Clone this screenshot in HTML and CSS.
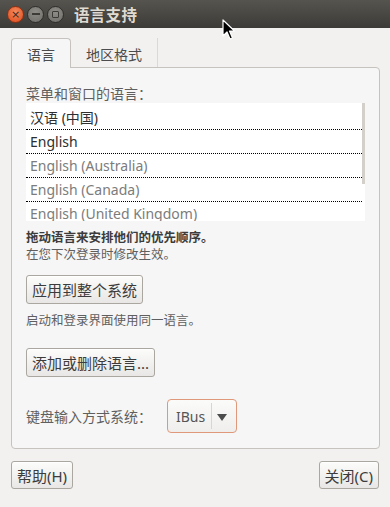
FILE: index.html
```html
<!DOCTYPE html>
<html lang="zh-CN">
<head>
    <meta charset="UTF-8">
    <meta name="viewport" content="width=device-width, initial-scale=1.0">
    <title>语言支持</title>
    <link rel="stylesheet" href="styles.css">
</head>
<body>
    <div class="window">
        <header class="titlebar">
            <div class="controls">
                <span class="ctl ctl-close">×</span>
                <span class="ctl ctl-min"><i class="min-bar"></i></span>
                <span class="ctl ctl-max"><i class="max-box"></i></span>
            </div>
            <div class="title">语言支持</div>
        </header>

        <main class="content">
            <div class="tabs">
                <div class="tab active">语言</div>
                <div class="tab">地区格式</div>
            </div>

            <section class="panel">
                <div class="label">菜单和窗口的语言：</div>
                <div class="lang-list">
                    <div class="row">汉语 (中国)</div>
                    <div class="row">English</div>
                    <div class="row dim">English (Australia)</div>
                    <div class="row dim">English (Canada)</div>
                    <div class="row dim">English (United Kingdom)</div>
                    <div class="scrollbar"></div>
                </div>

                <p class="hint"><b>拖动语言来安排他们的优先顺序。</b><br>在您下次登录时修改生效。</p>
                <button class="btn">应用到整个系统</button>
                <p class="hint">启动和登录界面使用同一语言。</p>
                <button class="btn btn-add">添加或删除语言...</button>

                <div class="kbd-row">
                    <span class="kbd-label">键盘输入方式系统：</span>
                    <div class="combo">
                        <span class="combo-text">IBus</span>
                        <span class="combo-sep"></span>
                        <span class="combo-arrow"></span>
                    </div>
                </div>
            </section>

            <div class="footer">
                <button class="btn">帮助(H)</button>
                <button class="btn">关闭(C)</button>
            </div>
        </main>

        <!-- mouse pointer on top of the window -->
        <svg class="pointer" width="14" height="22" viewBox="0 0 14 22">
            <path d="M1 1 L1 17 L5 13 L8 20 L10.5 19 L7.5 12 L12.5 12 Z" fill="#000" stroke="#fff" stroke-width="1.2" stroke-linejoin="round"/>
        </svg>
    </div>
</body>
</html>
```

FILE: styles.css
```css
body {
    margin: 0;
    padding: 0;
    background-color: #f2f1f0;
    font-family: "Noto Sans", "Noto Sans CJK SC", sans-serif;
    color: #3c3c3c;
}

.window {
    position: relative;
    width: 390px;
    height: 507px;
    overflow: hidden;
}

.titlebar {
    display: flex;
    align-items: center;
    height: 28px;
    background: linear-gradient(#55544f, #3c3b37);
}

.controls {
    display: flex;
    align-items: center;
    gap: 3px;
    padding-left: 7px;
    width: 67px;
}

.ctl {
    display: flex;
    align-items: center;
    justify-content: center;
    width: 15px;
    height: 15px;
    border-radius: 50%;
    border: 1px solid #2f2e2b;
    font-size: 12px;
    line-height: 1;
    color: #3a2a22;
}

.ctl-close {
    background: radial-gradient(circle at 50% 35%, #f58a5c, #dd4a1c);
    border-color: #8a3214;
    font-family: "DejaVu Sans", sans-serif;
    font-size: 11px;
}

.ctl-min,
.ctl-max {
    background: radial-gradient(circle at 50% 35%, #8e8d88, #6e6d68);
}

.min-bar {
    display: block;
    width: 8px;
    height: 2px;
    background-color: #3c3b37;
}

.max-box {
    display: block;
    width: 5px;
    height: 5px;
    border: 1.5px solid #3c3b37;
    border-radius: 1px;
}

.title {
    font-family: "Noto Sans CJK SC", sans-serif;
    font-weight: bold;
    font-size: 15.5px;
    color: #dfdbd2;
    letter-spacing: 0.3px;
}

.content {
    padding: 10px 10px 0 11px;
}

.tabs {
    display: flex;
    font-size: 14px;
    line-height: 18px;
}

.tab {
    padding: 8px 15px 3px;
    color: #4c4c4c;
    border-right: 1px solid #dcd9d4;
}

.tab.active {
    position: relative;
    z-index: 1;
    padding: 7px 15px 4px;
    margin-bottom: -1px;
    background-color: #f6f6f6;
    border: 1px solid #c6c3be;
    border-bottom: none;
    border-radius: 4px 4px 0 0;
}

.panel {
    background-color: #f6f6f6;
    border: 1px solid #c6c3be;
    border-radius: 0 4px 4px 4px;
    padding: 16px 14px 15px;
}

.label {
    font-family: "Noto Sans CJK SC", sans-serif;
    font-size: 14px;
    line-height: 18px;
    color: #5f5f5f;
}

.lang-list {
    position: relative;
    margin-top: 1px;
    height: 115px;
    padding: 3px 3px 0 0;
    background-color: #fff;
    overflow: hidden;
}

.row {
    height: 23px;
    line-height: 23px;
    padding-left: 4px;
    font-size: 14px;
    color: #2e2e2e;
    border-bottom: 1px dotted #000;
}

.row.dim {
    color: #7c7c7c;
}

.scrollbar {
    position: absolute;
    top: 0;
    right: 0;
    width: 3px;
    height: 81px;
    background-color: #d3cfcb;
}

.hint {
    margin: 8px 0 0;
    font-size: 12.5px;
    line-height: 17px;
    color: #5f5f5f;
}

.hint b {
    color: #3c3c3c;
}

.btn {
    display: block;
    height: 29px;
    padding: 0 5px;
    font-family: "Noto Sans", "Noto Sans CJK SC", sans-serif;
    font-size: 15px;
    color: #3c3c3c;
    background: linear-gradient(#fcfcfb, #e8e7e5);
    border: 1px solid #aaa6a0;
    border-radius: 3px;
    box-shadow: inset 0 1px 0 #fff;
}

.panel .btn {
    margin-top: 12px;
}

.panel .btn-add {
    margin-top: 19px;
}

.kbd-row {
    display: flex;
    align-items: center;
    margin-top: 22px;
}

.kbd-label {
    width: 141px;
    font-family: "Noto Sans CJK SC", sans-serif;
    font-size: 14px;
    color: #5f5f5f;
}

.combo {
    display: flex;
    align-items: center;
    width: 68px;
    height: 32px;
    border: 1px solid #e0987a;
    border-radius: 4px;
    background: linear-gradient(#fbfbfa, #efeeec);
}

.combo-text {
    padding-left: 8px;
    width: 35px;
    font-size: 14px;
    color: #555;
}

.combo-sep {
    width: 1px;
    height: 26px;
    background-color: #d9d6d1;
}

.combo-arrow {
    margin-left: 5px;
    width: 0;
    height: 0;
    border-left: 5px solid transparent;
    border-right: 5px solid transparent;
    border-top: 7px solid #4c4c4c;
    margin-top: 2px;
}

.footer {
    display: flex;
    justify-content: space-between;
    margin-top: 12px;
    padding-right: 1px;
}

.footer .btn {
    height: 28px;
}

.pointer {
    position: absolute;
    left: 222px;
    top: 19px;
}
```
